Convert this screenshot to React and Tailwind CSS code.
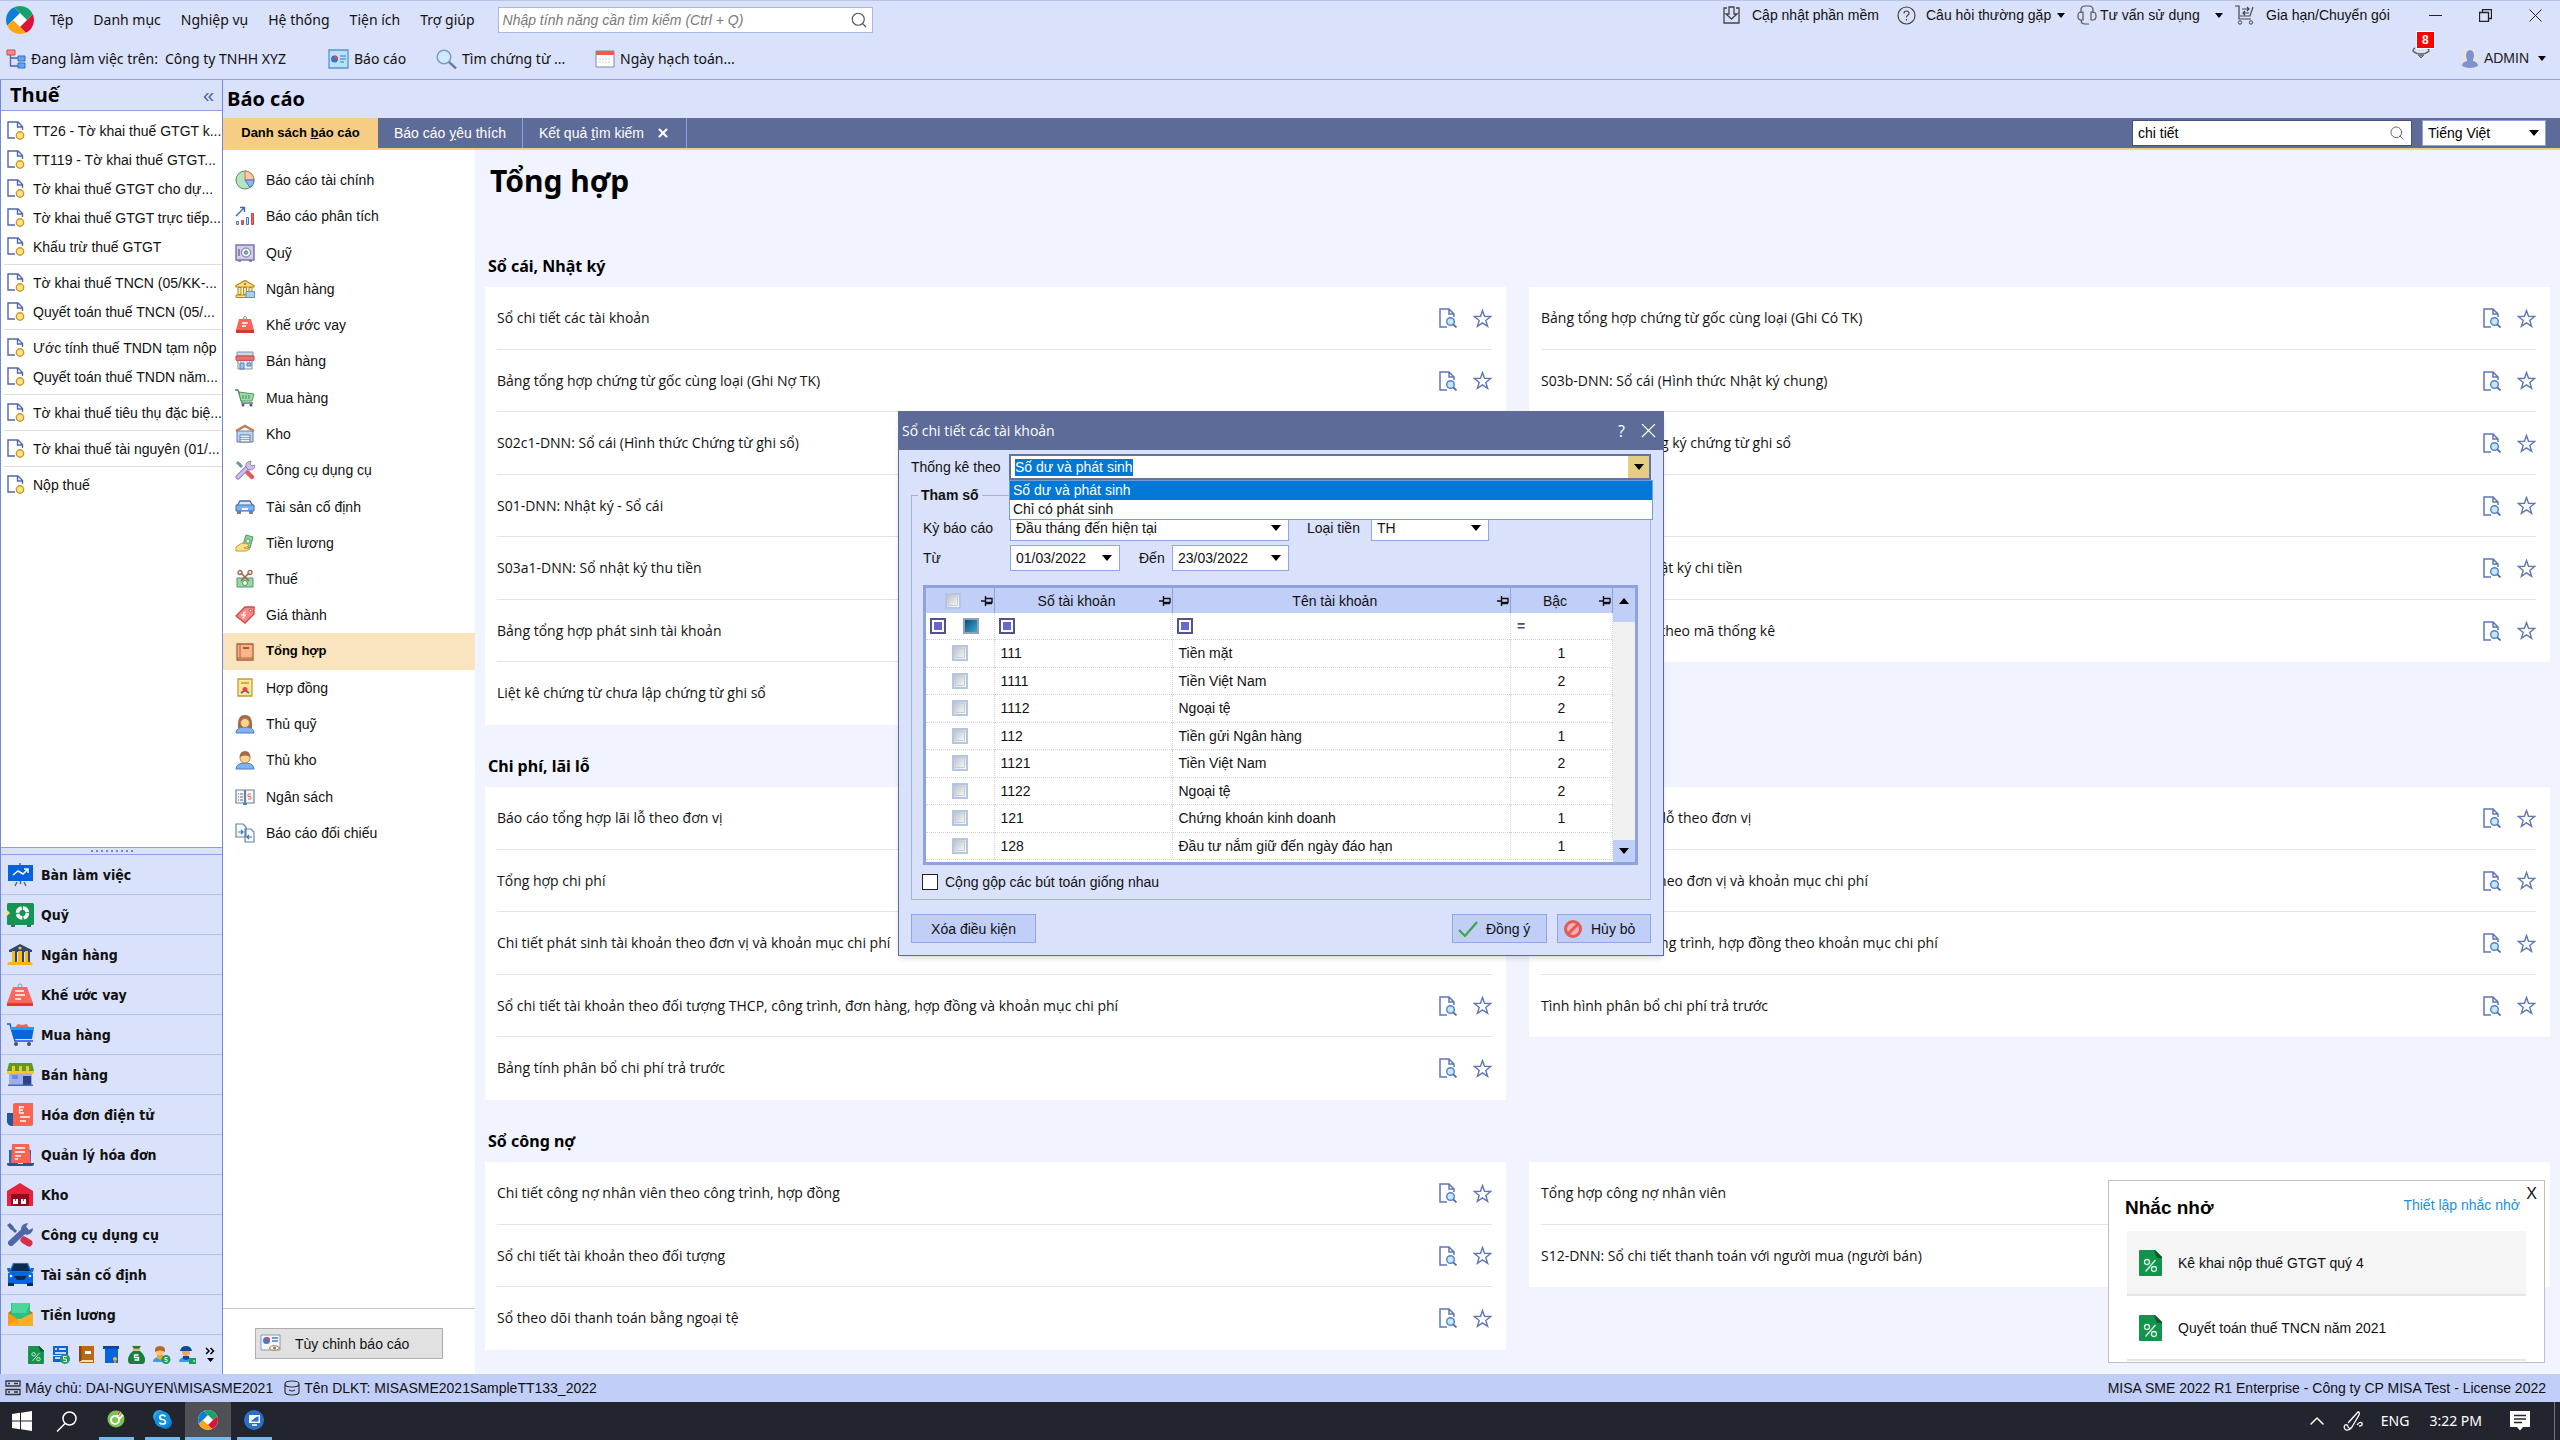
import React from 'react';
import { Search, X, ChevronUp } from 'lucide-react';

/* ---------- small shared pieces ---------- */

const Svg = ({ w = 20, h = 20, box, children, className = '' }) => (
    <svg width={w} height={h} viewBox={box || `0 0 ${w} ${h}`} fill="none" className={`shrink-0 ${className}`} aria-hidden="true">
        {children}
    </svg>
);

const Caret = ({ className = '' }) => (
    <Svg w={10} h={6} className={className}>
        <path d="M0 0h10L5 6z" fill="#000" />
    </Svg>
);

const Logo = ({ size = 28 }) => (
    <Svg w={size} h={size} box="0 0 28 28">
        <clipPath id={`logo-${size}`}><circle cx="14" cy="14" r="14" /></clipPath>
        <g clipPath={`url(#logo-${size})`}>
            <path d="M0 0h28v28H0z" fill="#fff" />
            <path d="M0 0h7l7 7-7 7-7 7z" fill="#0d7fd6" />
            <path d="M7 0h21v7l-7 7-7-7z" fill="#16a36a" />
            <path d="M28 7v21h-7l-7-7 7-7z" fill="#dc1238" />
            <path d="M0 21v7h21l-7-7-7-7z" fill="#fda512" />
        </g>
    </Svg>
);

const TaxDoc = () => (
    <Svg w={18} h={19}>
        <path d="M15.500 9V5.500L11 1H1v16h7M10.500 1v5h5" stroke="#5067b0" strokeWidth="1.400" />
        <circle cx="13" cy="14.500" r="3.700" fill="#ffe28a" stroke="#c99a22" strokeWidth="1.400" />
    </Svg>
);

const PreviewIcon = () => (
    <Svg w={18} h={20}>
        <path d="M15 9V6l-5-5H1v18h7M10 1v5h5" stroke="#6076b8" strokeWidth="1.500" />
        <circle cx="11.500" cy="13.500" r="3.800" fill="#c5e6fb" stroke="#4f83c4" strokeWidth="1.400" />
        <path d="M14.300 16.300L17.500 19.400" stroke="#5067b0" strokeWidth="1.800" />
    </Svg>
);

const StarIcon = () => (
    <Svg w={19} h={19}>
        <path d="M9.500 1.500l2 5.700 6.200.3-4.900 3.900 1.800 5.900-5.100-3.500-5.100 3.500 1.800-5.900L1.300 7.500l6.200-.3z" stroke="#6076b8" strokeWidth="1.400" />
    </Svg>
);

const PercentDoc = ({ w = 23, h = 26 }) => (
    <Svg w={w} h={h} box="0 0 23 26">
        <path d="M0 1q0-1 1-1h15l7 7v18q0 1-1 1H1q-1 0-1-1z" fill="#12944f" />
        <path d="M15 0h1l7 7v1h-5z" fill="#055a2c" />
        <g stroke="#d9f5e4" strokeWidth="1.300">
            <circle cx="8" cy="12" r="2.500" />
            <circle cx="15" cy="19" r="2.500" />
            <path d="M16.500 10L6.500 21.500" />
        </g>
    </Svg>
);

/* ---------- left rail ---------- */

const TAX_GROUPS = [
    ['TT26 - Tờ khai thuế GTGT k...', 'TT119 - Tờ khai thuế GTGT...', 'Tờ khai thuế GTGT cho dự...', 'Tờ khai thuế GTGT trực tiếp...', 'Khấu trừ thuế GTGT'],
    ['Tờ khai thuế TNCN (05/KK-...', 'Quyết toán thuế TNCN (05/...'],
    ['Ước tính thuế TNDN tạm nộp', 'Quyết toán thuế TNDN năm...'],
    ['Tờ khai thuế tiêu thụ đặc biệ...'],
    ['Tờ khai thuế tài nguyên (01/...'],
    ['Nộp thuế'],
];

const MODULES = [
    ['Bàn làm việc', <><path d="M1 2h25v16H1z" fill="#0463dc" /><path d="M6 12l5-4 5 3 5-5m-4 0h4v4" stroke="#fff" strokeWidth="1.500" /><path d="M10 19l-2 4M17 19l2 4M13 0v2M13.500 18v3" stroke="#456e9a" strokeWidth="1.500" /></>],
    ['Quỹ', <><path d="M4 21h4v3H4zM20 21h4v3h-4z" fill="#48636a" /><rect width="27" height="22" rx="1.500" fill="#159455" /><path d="M0 7l3 3-3 3z" fill="#ffe54a" /><circle cx="15.500" cy="10" r="5" stroke="#fff" strokeWidth="3.500" strokeDasharray="6.500 1.300" /></>],
    ['Ngân hàng', <><path d="M2 7L13 1l12 6v2H2z" fill="#2c4778" /><circle cx="13" cy="5" r="1.600" fill="#ffc117" /><path d="M5 8h3v11H5zM11 8h4v11h-4zM18 8h3v11h-3z" fill="#fdb813" /><path d="M8 8h2v11H8zM15 8h2v11h-2zM21 8h2v11h-2z" fill="#2c4778" /><path d="M2 19h22l2 3H0z" fill="#f4b41c" /></>],
    ['Khế ước vay', <><circle cx="13" cy="3" r="2" stroke="#8c9bad" /><path d="M6 4h14l6 16H0z" fill="#f8685c" /><path d="M0 20h26v3H0z" fill="#e23a26" /><path d="M8 8h9M8 12h10M8 16h6" stroke="#fff" strokeWidth="1.600" /></>],
    ['Mua hàng', <><path d="M8 4l3-3 4 1 5-1 2 4z" fill="#ef6a4d" /><path d="M0 1h3l5 17h18" stroke="#2448e8" strokeWidth="1.400" /><path d="M3 4h24l-2 12H7z" fill="#0765e2" /><path d="M3 4h24l-1 3H4z" fill="#1e9ff0" /><circle cx="9" cy="21" r="2" fill="#42526b" /><circle cx="22" cy="21" r="2" fill="#42526b" /></>],
    ['Bán hàng', <><path d="M2 8h23v15H2z" fill="#9db0e6" /><path d="M2 0h23l2 8H0z" fill="#5a9a2d" /><path d="M0 8h27v2q-2 2-4 0-2 2-4 0-3 2-5 0-2 2-5 0-2 2-4 0-3 2-5 0zM5 3h3v6H5zM12 3h3v6h-3zM19 3h3v6h-3z" fill="#fdc41b" /><path d="M16 13h8v10h-8z" fill="#2f427a" /><path d="M5 12h6v4H5z" fill="#6c8add" /><path d="M1 21.500h25V23H1z" fill="#4d67b8" /></>],
    ['Hóa đơn điện tử', <><path d="M0 10h8v13H5q-4 0-5-4z" fill="#1b5c98" /><path d="M6 2q0-2 2-2h18v21q0 2-2 2H6z" fill="#fb6352" /><path d="M12 4h5M12 7h4M12 10h5M12.500 4v6M13 14h10M13 18h6" stroke="#fff" strokeWidth="1.300" /></>],
    ['Quản lý hóa đơn', <><path d="M2 7h22v14H2z" fill="#1671b4" /><path d="M5 1h17l2 20H4z" fill="#fb6352" /><path d="M8 5h10M8 9h10M8 13h6M8 16h3" stroke="#fff" strokeWidth="1.400" /><path d="M0 20h27v1q0 2-2 2H2q-2 0-2-2z" fill="#1b5c98" /><path d="M11 20h5v1h-5z" fill="#cfe4f6" /></>],
    ['Kho', <><path d="M0 8L13 0l13 8v15H0z" fill="#e8213f" /><path d="M4 11h18v12H4z" fill="#8e0b20" /><path d="M6 16h5v5H6zM14 16h5v5h-5z" fill="#fff" /><path d="M8 16h1v2H8zM16 16h1v2h-1z" fill="#e8213f" /></>],
    ['Công cụ dụng cụ', <><path d="M3 3l6 6" stroke="#46689c" strokeWidth="3" /><path d="M0 2l3-2 4 4-3 3z" fill="#46689c" /><path d="M17 17l5 3" stroke="#d6304a" strokeWidth="7" strokeLinecap="round" /><path d="M4 20L18 7" stroke="#4f67a8" strokeWidth="6" strokeLinecap="round" /><path d="M14 6q0-5 7-6l-2 4 3 3 4-2q0 6-7 7z" fill="#4f67a8" /></>],
    ['Tài sản cố định', <><path d="M6 0h15l4 9H2z" fill="#0c74dd" /><path d="M7 1h13l3 7H4z" fill="#0a2c54" /><path d="M0 5h3l1 3-3 1zM27 5h-3l-1 3 3 1z" fill="#0c66d6" /><path d="M1 11q0-2 3-2h19q3 0 3 2v10H1z" fill="#0765e2" /><path d="M7 13h13l-3 4h-7z" fill="#0a2c54" /><path d="M1 20h6v3H1zM20 20h6v3h-6z" fill="#0a2c54" /><circle cx="4" cy="13" r="1.300" fill="#fff" /><circle cx="23" cy="13" r="1.300" fill="#fff" /></>],
    ['Tiền lương', <><path d="M1 10l4-3v10zM26 10l-4-3v10z" fill="#c56e11" /><path d="M4 0h19v16H4z" fill="#28c281" /><path d="M5 0h18l-4 10H5z" fill="#4ad79c" /><path d="M1 10l13 8L1 23z" fill="#fb9a12" /><path d="M26 10L1 22v1h25z" fill="#ffab24" /></>],
];

const SMALL_MODULES = [
    ['Thuế', <PercentDoc w={16} h={18} />],
    ['Giá thành', <Svg w={18} h={18}><path d="M1 0h15v9H1zM1 10h9v6H1z" fill="#0b62dc" /><path d="M3 3h2M7 3h7M3 7h11M3 12h5" stroke="#fff" strokeWidth="1.300" /><circle cx="13" cy="13" r="5" fill="#1d9d5c" /><path d="M14.500 10.500h-3v2.500h3v2.500h-3" stroke="#fff" /></Svg>],
    ['Tổng hợp', <Svg w={17} h={18}><path d="M2 0h14v17H3q-2 0-2-2z" fill="#b86a1c" /><path d="M2 14h13v2H2z" fill="#f2dcae" /><path d="M1 0h2.500v15H1z" fill="#84480f" /><path d="M7 5h6v3H7z" fill="#fff" /></Svg>],
    ['Ngân sách', <Svg w={17} h={18}><path d="M0 0h16v3H0z" fill="#0a48a8" /><path d="M2 3h13v14H2z" fill="#0765e2" /><circle cx="12" cy="13" r="2" fill="#ffb71b" /><path d="M11 14h2v3h-2z" fill="#f08c12" /></Svg>],
    ['Quỹ lương', <Svg w={17} h={18}><path d="M4 0h9l-2 3H6z" fill="#14803f" /><path d="M5 2.500h7v2H5z" fill="#f4a23c" /><path d="M5 5h7q5 4 5 9 0 4-3 4H3q-3 0-3-4 0-5 5-9z" fill="#14803f" /><path d="M10.500 9h-4v2.500h4V14h-4" stroke="#fff" strokeWidth="1.400" /></Svg>],
    ['Thủ quỹ', <Svg w={18} h={18}><circle cx="7" cy="6" r="4" fill="#f5c28a" /><path d="M2 6q-1-6 5-6t5 6q-5-3-10 0z" fill="#b86a1c" /><path d="M0 16q0-5 7-5t7 5z" fill="#3f9be6" /><path d="M4 9h6v3l-3 2-3-2z" fill="#f5a623" /><circle cx="13" cy="13.500" r="4.500" fill="#1d9d5c" /><path d="M14.500 11.500h-2.500v2h2v2h-2.500" stroke="#fff" /></Svg>],
    ['Thủ kho', <Svg w={18} h={18}><circle cx="7" cy="6" r="4" fill="#f5a65a" /><path d="M1 5q1-5 6-5t6 5z" fill="#0b4a94" /><path d="M0 16q0-5 7-5t7 5z" fill="#3f9be6" /><path d="M4 10h6v3l-3 1-3-1z" fill="#0b4a94" /><path d="M10 12h7v6h-7z" fill="#1d9d5c" /><path d="M14 15h2" stroke="#fff" /></Svg>],
];

const Sidebar = () => (
    <aside className="flex w-[223px] shrink-0 flex-col border-x border-[#7189dd] bg-[#dae1fb]">
        <div className="flex h-[31px] items-center justify-between border-b border-[#8ba0e8] pr-2 pl-[9px]">
            <h2 className="font-['Open_Sans',sans-serif] text-xl leading-6 font-bold text-black">Thuế</h2>
            <button className="text-xl leading-none text-[#4a64ad]" aria-label="Thu gọn">«</button>
        </div>
        <div className="flex-1 bg-white pt-[5px]">
            {TAX_GROUPS.map((group, i) => (
                <ul key={i} className="ml-[3px] border-[#dedede] pb-[3px] not-first:border-t not-first:pt-[3px]">
                    {group.map((item) => (
                        <li key={item} className="h-[29px]">
                            <a href="#" className="flex h-full items-center gap-2 pl-[3px] whitespace-nowrap">
                                <TaxDoc />
                                {item}
                            </a>
                        </li>
                    ))}
                </ul>
            ))}
        </div>
        <div className="flex h-2 items-center justify-center gap-[3px] border-y border-[#8ba0e8]">
            {Array.from({ length: 9 }, (_, i) => <span key={i} className="size-0.5 bg-[#6f87cf]" />)}
        </div>
        <nav className="font-['DejaVu_Sans_Condensed','Noto_Sans',sans-serif] text-sm font-bold">
            {MODULES.map(([name, drawing]) => (
                <a key={name} href="#" className="flex h-10 items-center gap-[7px] border-b border-[#b3c1f3] pl-1.5">
                    <Svg w={27} h={24}>{drawing}</Svg>
                    {name}
                </a>
            ))}
        </nav>
        <div className="flex h-[39px] items-center justify-end gap-2 pr-[7px]">
            {SMALL_MODULES.map(([name, icon]) => <button key={name} aria-label={name}>{icon}</button>)}
            <button aria-label="Xem thêm">
                <Svg w={10} h={16}><path d="M1 1l3 3-3 3M5.500 1l3 3-3 3" stroke="#000" strokeWidth="1.500" /><path d="M2 11h7l-3.500 4z" fill="#000" /></Svg>
            </button>
        </div>
    </aside>
);

/* ---------- report categories ---------- */

const CATEGORIES = [
    ['Báo cáo tài chính', <><circle cx="10" cy="10" r="9" fill="#b9e2bf" stroke="#4d8f5f" /><path d="M10 10V1a9 9 0 019 9z" fill="#fbc9a3" stroke="#c67a4a" /><path d="M10 10h9a9 9 0 01-4 7.500z" fill="#8fb8f0" stroke="#4a74c0" /></>],
    ['Báo cáo phân tích', <><path d="M1 10l8-8M5 1.500h4.500V6" stroke="#3c6cb0" strokeWidth="1.400" /><path d="M1.500 15.500h2v3h-2zM11.500 11.500h2v7h-2z" fill="#cfe3fa" stroke="#4a74b8" /><path d="M6.500 14.500h2v4h-2zM16.500 7.500h2v11h-2z" fill="#ee6a62" stroke="#c84444" /></>],
    ['Quỹ', <><rect x="1" y="2" width="18" height="15" fill="#d5c9ec" stroke="#7b6ba8" strokeWidth="1.400" /><circle cx="11" cy="9.500" r="4.500" fill="#f0f4fb" stroke="#67788f" /><circle cx="11" cy="9.500" r="1.700" fill="#9aa8bd" stroke="#67788f" /><path d="M4 6v7M3 18h3M14 18h3" stroke="#67788f" strokeWidth="1.500" /></>],
    ['Ngân hàng', <><path d="M1 6.500L10 1.500l9 5v1.500H1z" fill="#ffdf82" stroke="#b58420" strokeWidth="1.200" /><path d="M3 8.500h3v7H3zM8.500 8.500h3v7h-3zM14 8.500h3v7h-3z" fill="#ffe9a8" stroke="#b58420" /><path d="M1 16h18v2.500H1z" fill="#ffdf82" stroke="#b58420" /><circle cx="10" cy="5" r="1.200" fill="#b58420" /><path d="M11 12.500h8.500v6H11z" fill="#a9cef8" stroke="#5a92d8" /></>],
    ['Khế ước vay', <><circle cx="10" cy="3" r="1.500" stroke="#8a98a8" /><path d="M4 4h12l3 11H1z" fill="#f4665b" /><path d="M1 15h18v3H1z" fill="#d8382c" /><path d="M7 8h6M7 11h4" stroke="#fff" strokeWidth="1.300" /></>],
    ['Bán hàng', <><path d="M2 1h16v4H2z" fill="#cad8e8" stroke="#7f93a8" /><path d="M3 9h14v9H3z" fill="#e9f0f8" stroke="#7f93a8" /><path d="M1 5h18v4q-1.500 2-3 0-1.500 2-3 0-1.500 2-3 0-1.500 2-3 0-1.500 2-3 0-1.500 2-3 0z" fill="#f2706b" stroke="#c24a48" /><path d="M5 12h4v6H5zM12 12h4v3h-4z" fill="#9cc4f2" stroke="#5a7fa8" /></>],
    ['Mua hàng', <><path d="M0 2h3l4 13h11" stroke="#5b7f6b" strokeWidth="1.300" /><path d="M4 4l15 2-2 7H6z" fill="#9fdca8" stroke="#4b9a62" /><path d="M8 7v4M11 7v4M14 7v4" stroke="#3f8a55" /><circle cx="8" cy="17" r="1.500" fill="#4c5f70" /><circle cx="16" cy="17" r="1.500" fill="#4c5f70" /></>],
    ['Kho', <><path d="M2 7h16v11H2z" fill="#b9d3f3" stroke="#5c7fae" /><path d="M1 7l9-5 9 5" stroke="#c27a58" strokeWidth="2.500" /><path d="M5 11h10v7H5z" fill="#eef3f8" stroke="#6d819a" /><path d="M5 13.500h10M5 15.500h10" stroke="#6d819a" strokeWidth=".7" /></>],
    ['Công cụ dụng cụ', <><path d="M2 2l5 5" stroke="#7b8ea6" strokeWidth="3" /><path d="M12 12l5 5" stroke="#e05a5a" strokeWidth="4.500" strokeLinecap="round" /><path d="M3 17L14 6" stroke="#8f7fc0" strokeWidth="5" strokeLinecap="round" /><path d="M3 17L14 6" stroke="#cdbfe9" strokeWidth="3" strokeLinecap="round" /><path d="M11 7q-1-5 5-6l-1 3 2 2 3-1q0 5-6 5z" fill="#cdbfe9" stroke="#8f7fc0" /></>],
    ['Tài sản cố định', <><path d="M5 4h10l3 5H2z" fill="#d9e9fb" stroke="#3f6fae" strokeWidth="1.300" /><path d="M1 8h18v6H1z" fill="#7fb2f0" stroke="#3f6fae" /><path d="M2 14h4v3H2zM14 14h4v3h-4z" fill="#6f8296" /><path d="M7 11h6v2H7z" fill="#fff" /></>],
    ['Tiền lương', <><path d="M11 2l7 2-3 11-7-3z" fill="#8fd4a0" stroke="#4b9a62" /><circle cx="13" cy="8" r="2.200" fill="#e8f8ec" stroke="#4b9a62" /><path d="M1 14l6-4 6 1 1 2-5 2 6 1-4 2H1z" fill="#ffe08c" stroke="#c39a3a" /></>],
    ['Thuế', <><path d="M2 9h16v9H2z" fill="#9bd8a8" stroke="#4b9a62" /><circle cx="10" cy="14" r="2.500" fill="#e8f8ec" stroke="#4b9a62" /><path d="M6 4l8 8M14 4l-8 8" stroke="#a0644c" strokeWidth="1.600" /><circle cx="5" cy="3.500" r="2" stroke="#a0644c" strokeWidth="1.300" /><circle cx="15" cy="3.500" r="2" stroke="#a0644c" strokeWidth="1.300" /></>],
    ['Giá thành', <><path d="M1 11l9-9h9v7l-9 9z" fill="#f58a86" stroke="#d04a4a" strokeWidth="1.400" /><circle cx="15.500" cy="5.500" r="1.300" fill="#fff" stroke="#d04a4a" /><path d="M11 7q-3 0-2 3t-2 3M6 10h5" stroke="#fff" strokeWidth="1.200" /></>],
    ['Tổng hợp', <><path d="M2 2h16v16H2z" fill="#f9b48c" stroke="#a9603c" strokeWidth="1.300" /><path d="M5 2v14M2 16h16" stroke="#a9603c" /><path d="M8 6h6" stroke="#8a4526" strokeWidth="1.600" /></>],
    ['Hợp đồng', <><path d="M3 1h14v17H3z" fill="#ffe79a" stroke="#c39a3a" strokeWidth="1.300" /><path d="M6 5h8" stroke="#b58420" strokeWidth="1.200" /><path d="M6 15l3-2M14 15l-3-2" stroke="#3c6cc0" strokeWidth="2" /><circle cx="10" cy="11.500" r="2.500" fill="#e8433c" /></>],
    ['Thủ quỹ', <><path d="M3 14Q2 1 10 1t7 13z" fill="#a5694a" /><path d="M1 19q0-6 9-6t9 6z" fill="#7fb2f0" stroke="#4a7fc4" /><circle cx="10" cy="9" r="4.500" fill="#fbd690" stroke="#b5803f" /></>],
    ['Thủ kho', <><path d="M1 19q0-6 9-6t9 6z" fill="#7fb2f0" stroke="#4a7fc4" /><circle cx="10" cy="8" r="5" fill="#fbd690" stroke="#b5803f" /><path d="M4.500 7Q5 1 10 1t5.500 6q-5-3-11 0z" fill="#a5694a" /></>],
    ['Ngân sách', <><path d="M1 3h8.500v13H1zM10.500 3H19v13h-8.500z" fill="#f6f9fc" stroke="#6d8298" strokeWidth="1.200" /><path d="M3 7h1M5 7h3M3 10h1M5 10h3M3 13h1M5 13h3" stroke="#52647a" strokeWidth="1.200" /><path d="M16 7h-3v2.500h3V12h-3" stroke="#ee6a62" /><path d="M8 17h4" stroke="#4a7fc4" strokeWidth="2" /></>],
    ['Báo cáo đối chiếu', <><path d="M1 1h7l3 3v10H1zM10 6h6l3 3v10h-9z" fill="#f6f9fc" stroke="#6d8298" strokeWidth="1.200" /><path d="M3 9h5M6 7l2 2-2 2M17 14h-5M14 12l-2 2 2 2" stroke="#2f7ac4" strokeWidth="1.200" /></>],
];

const ReportMenu = () => (
    <div className="flex w-[252px] shrink-0 flex-col justify-between bg-white pt-3">
        <nav className="flex h-[689px] flex-col">
            {CATEGORIES.map(([name, drawing]) => (
                <a
                    key={name}
                    href="#"
                    className={`flex flex-1 items-center gap-[11px] pl-3 ${name === 'Tổng hợp' ? 'bg-[#fae4bd] text-[13px] font-bold text-black' : ''}`}
                >
                    <Svg>{drawing}</Svg>
                    {name}
                </a>
            ))}
        </nav>
        <div className="flex h-[66px] justify-center border-t border-[#c6c6c6] pt-[19px]">
            <button className="flex h-[31px] w-[188px] items-center gap-3.5 border border-[#adadad] bg-[#e1e1e1] pl-1">
                <Svg w={21} h={19}>
                    <path d="M1 1h19v15H1z" fill="#f4f8fd" stroke="#7d99c9" />
                    <circle cx="6.500" cy="6.500" r="3.500" fill="#4a78c8" />
                    <path d="M6.500 6.500V3a3.500 3.500 0 013.500 3.500z" fill="#e8433c" />
                    <path d="M12 4h6M12 7h6" stroke="#4a78c8" strokeWidth="1.300" />
                    <path d="M9 14q5-5 11 0-6 5-11 0z" fill="#fff7dd" stroke="#b58420" />
                    <circle cx="14.500" cy="14" r="1.500" fill="#4a78c8" />
                </Svg>
                Tùy chỉnh báo cáo
            </button>
        </div>
    </div>
);

/* ---------- report list ---------- */

const SECTIONS = [
    {
        title: 'Sổ cái, Nhật ký',
        left: [
            'Sổ chi tiết các tài khoản',
            'Bảng tổng hợp chứng từ gốc cùng loại (Ghi Nợ TK)',
            'S02c1-DNN: Sổ cái (Hình thức Chứng từ ghi sổ)',
            'S01-DNN: Nhật ký - Sổ cái',
            'S03a1-DNN: Sổ nhật ký thu tiền',
            'Bảng tổng hợp phát sinh tài khoản',
            'Liệt kê chứng từ chưa lập chứng từ ghi sổ',
        ],
        right: [
            'Bảng tổng hợp chứng từ gốc cùng loại (Ghi Có TK)',
            'S03b-DNN: Sổ cái (Hình thức Nhật ký chung)',
            'S02b-DNN: Sổ đăng ký chứng từ ghi sổ',
            'Sổ nhật ký chung',
            'S03a2-DNN: Sổ nhật ký chi tiền',
            'Bảng tổng hợp TK theo mã thống kê',
        ],
    },
    {
        title: 'Chi phí, lãi lỗ',
        left: [
            'Báo cáo tổng hợp lãi lỗ theo đơn vị',
            'Tổng hợp chi phí',
            'Chi tiết phát sinh tài khoản theo đơn vị và khoản mục chi phí',
            'Sổ chi tiết tài khoản theo đối tượng THCP, công trình, đơn hàng, hợp đồng và khoản mục chi phí',
            'Bảng tính phân bổ chi phí trả trước',
        ],
        right: [
            'Báo cáo chi tiết lãi lỗ theo đơn vị',
            'Tổng hợp chi phí theo đơn vị và khoản mục chi phí',
            'Chi tiết CP theo công trình, hợp đồng theo khoản mục chi phí',
            'Tình hình phân bổ chi phí trả trước',
        ],
    },
    {
        title: 'Sổ công nợ',
        left: [
            'Chi tiết công nợ nhân viên theo công trình, hợp đồng',
            'Sổ chi tiết tài khoản theo đối tượng',
            'Sổ theo dõi thanh toán bằng ngoại tệ',
        ],
        right: ['Tổng hợp công nợ nhân viên', 'S12-DNN: Sổ chi tiết thanh toán với người mua (người bán)'],
    },
];

const ReportCard = ({ items }) => (
    <ul className="self-start bg-white pr-[14px] pl-3">
        {items.map((item) => (
            <li key={item} className="flex h-[62px] items-center border-b border-[#e4e4e6] last:border-white odd:h-[63px]">
                <a href="#" className="flex-1">{item}</a>
                <button className="mr-4" aria-label="Xem báo cáo"><PreviewIcon /></button>
                <button aria-label="Yêu thích"><StarIcon /></button>
            </li>
        ))}
    </ul>
);

const ReportList = () => (
    <div className="min-w-0 flex-1 overflow-hidden bg-[#f1f4ff] px-2.5 font-['Open_Sans',sans-serif] text-sm">
        <h1 className="h-[75px] pt-[11px] pl-[5px] font-['Noto_Sans',sans-serif] text-3xl leading-10 font-bold text-black">Tổng hợp</h1>
        {SECTIONS.map((section) => (
            <section key={section.title}>
                <h2 className="h-[62px] pt-[29px] pl-[3px] font-['Noto_Sans',sans-serif] text-base leading-6 font-bold text-black">{section.title}</h2>
                <div className="grid grid-cols-2 gap-[23px]">
                    <ReportCard items={section.left} />
                    <ReportCard items={section.right} />
                </div>
            </section>
        ))}
    </div>
);

/* ---------- header ---------- */

const AppHeader = () => (
    <header className="flex h-20 justify-between border-t border-b border-t-[#b9c3e6] border-b-[#8ba0e8] bg-[#dae1fb]">
        <div>
            <div className="flex h-[38px] items-center pl-1.5 font-['Noto_Sans',sans-serif]">
                <Logo />
                <nav className="ml-4 flex gap-5">
                    {['Tệp', 'Danh mục', 'Nghiệp vụ', 'Hệ thống', 'Tiện ích', 'Trợ giúp'].map((m) => <button key={m}>{m}</button>)}
                </nav>
                <label className="ml-[23px] flex h-[26px] w-[375px] items-center border border-[#a9b8e8] bg-white pr-1">
                    <input
                        aria-label="Tìm kiếm tính năng"
                        placeholder="Nhập tính năng cần tìm kiếm (Ctrl + Q)"
                        className="min-w-0 flex-1 px-1 font-['Liberation_Sans',sans-serif] italic outline-none placeholder:text-[#7a7a7a]"
                    />
                    <Search size={18} color="#555" strokeWidth={1.5} />
                </label>
            </div>
            <div className="flex h-10 items-center pl-1.5 font-['Noto_Sans',sans-serif]">
                <Svg>
                    <path d="M1 1h8v5H1z" fill="#f58a86" stroke="#d04a4a" />
                    <path d="M4.500 6v11H12M4.500 9H12" stroke="#4a64ad" strokeWidth="1.300" />
                    <path d="M12 7h7v5h-7zM12 14h7v5h-7z" fill="#5fa8f5" stroke="#2f6fc0" />
                </Svg>
                <span className="ml-[5px] w-[134px]">Đang làm việc trên:</span>
                <span className="w-[163px]">Công ty TNHH XYZ</span>
                <button className="flex w-[108px] items-center gap-[5px]">
                    <Svg w={21} h={20}>
                        <path d="M1 1h19v18H1z" fill="#b7e2fa" stroke="#5a92cc" strokeWidth="1.300" />
                        <circle cx="6.500" cy="10" r="3.500" fill="#3f6fc0" />
                        <path d="M6.500 10V6.500A3.500 3.500 0 0110 10z" fill="#e8433c" />
                        <path d="M12 7h6M12 10h6M12 13h4" stroke="#3f6fc0" strokeWidth="1.200" />
                    </Svg>
                    Báo cáo
                </button>
                <button className="flex w-[159px] items-center gap-[5px]">
                    <Svg w={21} h={20}>
                        <circle cx="8" cy="8" r="6.800" fill="#cfeafc" stroke="#7b9dbb" strokeWidth="1.500" />
                        <path d="M13 13l7 6.500" stroke="#6d8298" strokeWidth="2.500" />
                    </Svg>
                    Tìm chứng từ ...
                </button>
                <button className="flex items-center gap-[5px]">
                    <Svg w={20} h={18}>
                        <path d="M1 1h18v16H1z" fill="#fff" stroke="#7b8aa6" />
                        <path d="M1 1h18v4H1z" fill="#ee5a52" />
                        <path d="M4 9h12M4 12h12" stroke="#c5cede" strokeDasharray="2 1" />
                    </Svg>
                    Ngày hạch toán...
                </button>
            </div>
        </div>
        <div>
            <div className="flex h-7 items-center">
                <button className="flex w-[176px] items-center gap-2.5">
                    <Svg w={21} h={19}><path d="M6 2H3v15h15V2h-3M8 1h5v7h3l-5.500 5L5 8h3z" stroke="#444" strokeWidth="1.300" /></Svg>
                    Cập nhật phần mềm
                </button>
                <button className="flex w-[180px] items-center">
                    <Svg w={19} h={19} className="mr-2.5"><circle cx="9.500" cy="9.500" r="8.500" stroke="#444" strokeWidth="1.200" /><path d="M7 7.500q0-2.500 2.500-2.500T12 7.300q0 1.200-1.300 2T9.500 11.500M9.500 13v1.500" stroke="#444" strokeWidth="1.200" /></Svg>
                    <span className="flex-1 text-left">Câu hỏi thường gặp</span>
                    <Svg w={8} h={5} className="mr-3"><path d="M0 0h8L4 5z" fill="#000" /></Svg>
                </button>
                <button className="flex w-[158px] items-center">
                    <Svg w={20} h={20} className="mr-[3px]"><path d="M4 8V5q0-4 4-4h4q4 0 4 4v3M4 7q-3 0-3 4t3 4h2V7zM16 7q3 0 3 4t-3 4h-2V7zM4 15q0 4 4 4h4" stroke="#555" strokeWidth="1.200" /></Svg>
                    <span className="flex-1 text-left">Tư vấn sử dụng</span>
                    <Svg w={8} h={5} className="mr-3"><path d="M0 0h8L4 5z" fill="#000" /></Svg>
                </button>
                <button className="flex w-[175px] items-center gap-3">
                    <Svg w={19} h={20}><path d="M0 1h4v13h12M18 2l-3 9H5M7 4h7M12 2l2 2-2 2M14 8H8M10 6L8 8l2 2" stroke="#444" strokeWidth="1.200" /><circle cx="5" cy="17.500" r="1.700" stroke="#444" /><circle cx="16" cy="17.500" r="1.700" stroke="#444" /></Svg>
                    Gia hạn/Chuyển gói
                </button>
                <button className="flex w-[50px] justify-center" aria-label="Thu nhỏ"><Svg w={13} h={13}><path d="M0 6.500h13" stroke="#222" /></Svg></button>
                <button className="flex w-[50px] justify-center" aria-label="Khôi phục"><Svg w={13} h={13}><path d="M.5 3.500h9v9h-9zM3.500 3V.5h9v9H10" stroke="#222" strokeWidth="1.300" /></Svg></button>
                <button className="flex w-[50px] justify-center" aria-label="Đóng"><Svg w={13} h={13}><path d="M.5.5l12 12M12.500.5l-12 12" stroke="#222" /></Svg></button>
            </div>
            <div className="flex h-[50px] items-center justify-end pt-2 pr-3.5">
                <button className="relative mr-[31px] self-start pt-2.5" aria-label="Thông báo">
                    <Svg w={18} h={12}><path d="M3 1Q1 2 1 4q3 3 8 3t8-3q0-2-2-3" stroke="#666" strokeWidth="1.400" /><path d="M6 8h6l-3 3z" fill="#999" stroke="#666" /></Svg>
                    <span className="absolute -top-1.5 left-1 border border-white bg-[#ff0000] px-[5px] text-xs leading-4 font-bold text-white">8</span>
                </button>
                <button className="flex items-center gap-[5px] text-[#222]">
                    <Svg w={18} h={20}><ellipse cx="9" cy="9.500" rx="9" ry="9.500" fill="#e3e3e8" /><ellipse cx="9" cy="7.500" rx="4" ry="5.500" fill="#7d92cc" /><path d="M1 18q0-4 5-5V9h6v4q5 1 5 5-8 4-16 0z" fill="#7d92cc" /></Svg>
                    ADMIN
                    <Svg w={8} h={5} className="ml-1"><path d="M0 0h8L4 5z" fill="#000" /></Svg>
                </button>
            </div>
        </div>
    </header>
);

const TabBar = () => (
    <div className="flex h-8 items-stretch border-b-2 border-[#f5cd84] bg-[#5d6b99] text-white">
        <button className="w-[155px] bg-[#f5cd84] text-[13px] font-bold text-black">Danh sách <u>b</u>áo cáo</button>
        <button className="w-[145px] border-r border-[#8ba0e8]">Báo cáo <u>y</u>êu thích</button>
        <button className="flex w-[164px] items-center justify-center gap-3 border-r border-[#8ba0e8]">
            <span>Kết quả <u>t</u>ìm kiếm</span>
            <X size={14} strokeWidth={3.5} />
        </button>
        <div className="ml-auto flex items-center gap-2.5 pr-3.5 text-black">
            <label className="flex h-[26px] w-[280px] items-center border border-[#42507f] bg-white pr-1.5">
                <input aria-label="Tìm báo cáo" defaultValue="chi tiết" className="min-w-0 flex-1 px-[5px] outline-none" />
                <Search size={16} color="#666" strokeWidth={1.5} />
            </label>
            <label className="flex h-[26px] w-[124px] items-center border border-[#8ba0e8] bg-white">
                <select aria-label="Ngôn ngữ" className="h-full flex-1 appearance-none pl-[5px] outline-none"><option>Tiếng Việt</option></select>
                <Caret className="mr-1.5" />
            </label>
        </div>
    </div>
);

/* ---------- parameter dialog ---------- */

const ACCOUNTS = [
    ['111', 'Tiền mặt', 1],
    ['1111', 'Tiền Việt Nam', 2],
    ['1112', 'Ngoại tệ', 2],
    ['112', 'Tiền gửi Ngân hàng', 1],
    ['1121', 'Tiền Việt Nam', 2],
    ['1122', 'Ngoại tệ', 2],
    ['121', 'Chứng khoán kinh doanh', 1],
    ['128', 'Đầu tư nắm giữ đến ngày đáo hạn', 1],
];

const GridCheck = ({ label }) => (
    <input
        type="checkbox"
        aria-label={label}
        className="block size-4 appearance-none border-2 border-[#b4c6e4] bg-linear-to-br from-[#b9c0ca] to-white outline outline-offset-[-4px] outline-[#c9cdd4]"
    />
);

const Pin = () => (
    <Svg w={12} h={10}><path d="M0 5h4M4.500 0v10M5 2.500h6v4H5M5 7.500h6" stroke="#111" strokeWidth="1.400" /></Svg>
);

const FilterMark = () => (
    <span className="flex size-4 items-center justify-center border-2 border-[#53538c] bg-white"><span className="size-2 bg-[#6767cf]" /></span>
);

const HeadCell = ({ children }) => (
    <th className="border-r border-[#8ea2e0] bg-[#c1cef8] p-0 font-normal">
        <div className="flex h-[25px] items-center pr-px">
            <span className="flex flex-1 justify-center">{children}</span>
            <Pin />
        </div>
    </th>
);

const cellCls = 'border-r border-dotted border-[#d4d4d4] p-0';

const AccountGrid = () => (
    <div className="mt-3.5 flex h-[280px] border-[3px] border-[#8ea2e0] bg-white">
        <div className="flex-1">
            <table className="w-full table-fixed">
                <colgroup>
                    <col className="w-[68px]" />
                    <col className="w-[178px]" />
                    <col />
                    <col className="w-[102px]" />
                </colgroup>
                <thead>
                    <tr>
                        <HeadCell><GridCheck label="Chọn tất cả" /></HeadCell>
                        <HeadCell>Số tài khoản</HeadCell>
                        <HeadCell>Tên tài khoản</HeadCell>
                        <HeadCell>Bậc</HeadCell>
                    </tr>
                </thead>
                <tbody>
                    <tr className="h-[26px] border-b border-dotted border-[#d4d4d4]">
                        <td className={cellCls}>
                            <div className="flex items-center gap-[17px] pl-1"><FilterMark /><span className="size-4 border-2 border-[#8fa3b8] bg-linear-to-br from-[#0a4f78] to-[#3fa9dc]" /></div>
                        </td>
                        <td className={`${cellCls} pl-1`}><FilterMark /></td>
                        <td className={`${cellCls} pl-1`}><FilterMark /></td>
                        <td className={`${cellCls} pl-1.5 font-bold text-[#4b4b80]`}>=</td>
                    </tr>
                    {ACCOUNTS.map(([code, name, level]) => (
                        <tr key={code} className="h-7 border-b border-dotted border-[#d4d4d4] odd:h-[27px]">
                            <td className={`${cellCls} pl-[26px]`}><GridCheck label={`Chọn ${code}`} /></td>
                            <td className={`${cellCls} pl-1.5`}>{code}</td>
                            <td className={`${cellCls} pl-1.5`}>{name}</td>
                            <td className={`${cellCls} text-center`}>{level}</td>
                        </tr>
                    ))}
                </tbody>
            </table>
        </div>
        <div className="flex w-[22px] flex-col justify-between bg-[#f0f0f0]">
            <button className="flex h-[34px] items-start justify-center bg-[#c1cef8] pt-2.5" aria-label="Cuộn lên"><Caret className="rotate-180" /></button>
            <button className="flex h-[22px] items-center justify-center bg-[#c1cef8]" aria-label="Cuộn xuống"><Caret /></button>
        </div>
    </div>
);

const Field = ({ className, children }) => (
    <span className={`flex h-[26px] items-center border border-[#8ea6ea] bg-white pr-[7px] ${className}`}>
        {children}
        <Caret />
    </span>
);

const inputCls = 'h-full min-w-0 flex-1 appearance-none pl-[5px] outline-none';
const dialogBtn = 'flex h-[29px] items-center border border-[#8ea6ea] bg-[#c1cef8]';

const ParamDialog = () => (
    <div role="dialog" aria-label="Sổ chi tiết các tài khoản" className="absolute top-[411px] left-[898px] w-[766px] border border-[#5d6b99] bg-[#dae1fb] shadow-md">
        <div className="flex h-[38px] items-center bg-[#5d6b99] px-[3px] pr-1.5 font-['Open_Sans',sans-serif] text-sm text-white">
            <span className="flex-1">Sổ chi tiết các tài khoản</span>
            <button className="mr-4 text-base" aria-label="Trợ giúp">?</button>
            <button aria-label="Đóng"><Svg w={16} h={14}><path d="M1 0l13 13M14 0L1 13" stroke="#fff" strokeWidth="1.200" /></Svg></button>
        </div>
        <div className="px-3 pt-1 pb-3">
            <div className="flex h-[26px] items-center">
                <span id="stat-by" className="w-[98px]">Thống kê theo</span>
                <div className="relative h-full flex-1">
                    <button role="combobox" aria-expanded="true" aria-labelledby="stat-by" className="flex h-full w-full items-center border-2 border-[#65739f] bg-white pl-1">
                        <span className="bg-[#0078d7] leading-[17px] text-white">Số dư và phát sinh</span>
                        <span className="ml-auto flex h-full w-[21px] items-center justify-center bg-[#e5cd84]"><Caret /></span>
                    </button>
                    <ul role="listbox" className="absolute top-full -right-0.5 left-0 z-10 border border-[#6f9fd8] bg-white leading-[19px]">
                        <li role="option" aria-selected="true" className="bg-[#0078d7] pl-[3px] text-white">Số dư và phát sinh</li>
                        <li role="option" aria-selected="false" className="pl-[3px]">Chỉ có phát sinh</li>
                    </ul>
                </div>
            </div>
            <fieldset className="mt-1.5 border border-[#9fb1ee] pt-[11px] pr-3 pb-2 pl-[11px]">
                <legend className="-ml-[5px] px-[3px] text-sm leading-[18px] font-bold">Tham số</legend>
                <div className="flex items-center">
                    <label htmlFor="period" className="w-[87px]">Kỳ báo cáo</label>
                    <Field className="w-[279px]"><select id="period" className={inputCls}><option>Đầu tháng đến hiện tại</option></select></Field>
                    <label htmlFor="currency" className="ml-[18px] w-16">Loại tiền</label>
                    <Field className="w-[118px]"><select id="currency" className={inputCls}><option>TH</option></select></Field>
                </div>
                <div className="mt-1 flex items-center">
                    <label htmlFor="from" className="w-[87px]">Từ</label>
                    <Field className="w-[110px]"><input id="from" defaultValue="01/03/2022" className={inputCls} /></Field>
                    <label htmlFor="to" className="ml-[19px] w-[33px]">Đến</label>
                    <Field className="w-[117px]"><input id="to" defaultValue="23/03/2022" className={inputCls} /></Field>
                </div>
                <AccountGrid />
                <label className="mt-2 flex h-[18px] items-center gap-[7px]">
                    <input type="checkbox" className="-ml-px size-4 appearance-none border border-[#222] bg-white" />
                    Cộng gộp các bút toán giống nhau
                </label>
            </fieldset>
            <div className="mt-3.5 flex">
                <button className={`${dialogBtn} w-[125px] justify-center`}>Xóa điều kiện</button>
                <button className={`${dialogBtn} ml-auto w-[95px] gap-2 pl-[5px]`}>
                    <Svg><path d="M1 11l6 6L19 3" stroke="#35a84c" strokeWidth="2.200" /></Svg>
                    Đồng ý
                </button>
                <button className={`${dialogBtn} ml-2.5 w-[94px] gap-2 pl-[5px]`}>
                    <Svg><circle cx="10" cy="10" r="7.500" fill="#f6aeb0" stroke="#e25a56" strokeWidth="3" /><path d="M5 15L15 5" stroke="#e25a56" strokeWidth="3" /></Svg>
                    Hủy bỏ
                </button>
            </div>
        </div>
    </div>
);

/* ---------- reminders, status bar, taskbar ---------- */

const Reminders = () => (
    <div className="absolute right-[15px] bottom-[77px] h-[183px] w-[437px] overflow-hidden border border-[#bfbfbf] bg-white pt-3.5 pr-[18px] pl-4">
        <div className="flex h-7 items-start justify-between pr-1.5">
            <h3 className="text-[19px] leading-[26px] font-bold text-black">Nhắc nhở</h3>
            <a href="#" className="text-[#1b8fe4]">Thiết lập nhắc nhở</a>
        </div>
        <button className="absolute top-1 right-[7px] text-base leading-[18px]" aria-label="Đóng nhắc nhở">X</button>
        <ul className="mt-2 ml-0.5">
            {['Kê khai nộp thuế GTGT quý 4', 'Quyết toán thuế TNCN năm 2021'].map((t) => (
                <li key={t} className="flex h-[65px] items-center gap-4 border-b-2 border-[#e6e6e6] pl-3 first:bg-[#f5f5f5]">
                    <PercentDoc />
                    {t}
                </li>
            ))}
        </ul>
    </div>
);

const StatusBar = () => (
    <footer className="flex h-7 items-center bg-[#c1cef8] px-[5px] pr-3.5">
        <Svg w={16} h={16}><path d="M1 1h14v5H1zM1 9.500h14v5H1zM3 3.500h2M3 12h2M9 3.500h4M9 12h4" stroke="#333" strokeWidth="1.300" /></Svg>
        <span className="mr-[11px] ml-1">Máy chủ: DAI-NGUYEN\MISASME2021</span>
        <Svg w={16} h={16}><path d="M1 4q0-3 7-3t7 3-7 3-7-3v8q0 3 7 3t7-3V4M5 10q3 2 6 0" stroke="#333" strokeWidth="1.200" /></Svg>
        <span className="ml-1 flex-1">Tên DLKT: MISASME2021SampleTT133_2022</span>
        <span>MISA SME 2022 R1 Enterprise - Công ty CP MISA Test - License 2022</span>
    </footer>
);

const TaskApp = ({ active, children, label }) => (
    <button aria-label={label} className={`flex h-full w-[46px] flex-col items-center justify-between pt-2 ${active ? 'bg-[#4f5156]' : ''}`}>
        {children}
        <span className={`h-[3px] bg-[#76b9ed] ${active ? 'w-full' : 'w-[35px]'}`} />
    </button>
);

const Taskbar = () => (
    <div className="flex h-[38px] items-center bg-[#23252e] font-['Noto_Sans',sans-serif] text-sm text-white">
        <button className="mr-6 ml-3" aria-label="Bắt đầu"><Svg><path d="M0 3l8-1.200V9.500H0zM9 1.700L20 0v9.500H9zM0 10.500h8v7.700L0 17zM9 10.500h11V20L9 18.300z" fill="#fff" /></Svg></button>
        <button className="mr-4" aria-label="Tìm kiếm"><Svg w={21} h={21}><circle cx="13.500" cy="7.500" r="6.500" stroke="#fff" strokeWidth="1.500" /><path d="M9 12.500l-8 8" stroke="#fff" strokeWidth="1.500" /></Svg></button>
        <TaskApp label="Cốc Cốc"><Svg w={18} h={18}><circle cx="9" cy="9" r="8.500" fill="#7bc54c" /><circle cx="8" cy="10" r="4" stroke="#fff" strokeWidth="2" /><path d="M10 7l3-5M12 9l4-4" stroke="#fff" strokeWidth="2" /><path d="M11 5l2-4" stroke="#e8433c" strokeWidth="1.500" /></Svg></TaskApp>
        <TaskApp label="Skype"><Svg w={19} h={19}><circle cx="6.500" cy="6.500" r="6.500" fill="#28a8ea" /><circle cx="12.500" cy="12.500" r="6.500" fill="#0f78d4" /><circle cx="9.500" cy="9.500" r="8" fill="#0f93e0" /><path d="M12.500 6.500q-1-1.300-3-1.300-2.700 0-2.700 2T9.500 9.500q3 .5 3 2.500t-3 2q-2.200 0-3-1.500" stroke="#fff" strokeWidth="1.700" /></Svg></TaskApp>
        <TaskApp label="MISA SME" active><Logo size={20} /></TaskApp>
        <TaskApp label="Điều khiển từ xa"><Svg w={20} h={20}><circle cx="10" cy="10" r="10" fill="#2a72c8" /><path d="M5 5h11v8H5z" fill="#fff" /><path d="M6.500 11.500l5-4 3-1.500v5.500z" fill="#2a72c8" /><path d="M8 15h5" stroke="#fff" strokeWidth="1.500" /></Svg></TaskApp>
        <div className="ml-auto flex h-full items-center">
            <ChevronUp size={24} strokeWidth={1.5} className="mr-3.5" />
            <Svg w={22} h={20}><path d="M5 12L15 1q2 0 1 3L9 16q-2 3-4 0 0-3-3-2-2 3 1 5 3 1 6-3M14 14q3-4 5-2 1 3-3 3" stroke="#fff" strokeWidth="1.300" /></Svg>
            <span className="ml-4">ENG</span>
            <span className="mr-7 ml-5">3:22 PM</span>
            <Svg w={20} h={20}><path d="M0 0h20v16h-7l-3 3.500L7 16H0z" fill="#fff" /><path d="M4 4.500h12M4 8h12M4 11.500h8" stroke="#23252e" strokeWidth="1.300" /></Svg>
            <span className="ml-6 h-full w-1.5 border-l border-[#777]" />
        </div>
    </div>
);

export default function App() {
    return (
        <div className="relative flex h-screen flex-col overflow-hidden bg-[#dae1fb] font-['Liberation_Sans',sans-serif] text-sm text-[#111]">
            <AppHeader />
            <div className="flex min-h-0 flex-1">
                <Sidebar />
                <main className="flex min-w-0 flex-1 flex-col">
                    <div className="flex h-[38px] items-center pl-1 font-['Open_Sans',sans-serif] text-xl font-bold text-black">Báo cáo</div>
                    <TabBar />
                    <div className="flex min-h-0 flex-1">
                        <ReportMenu />
                        <ReportList />
                    </div>
                </main>
            </div>
            <StatusBar />
            <Taskbar />
            <ParamDialog />
            <Reminders />
        </div>
    );
}
